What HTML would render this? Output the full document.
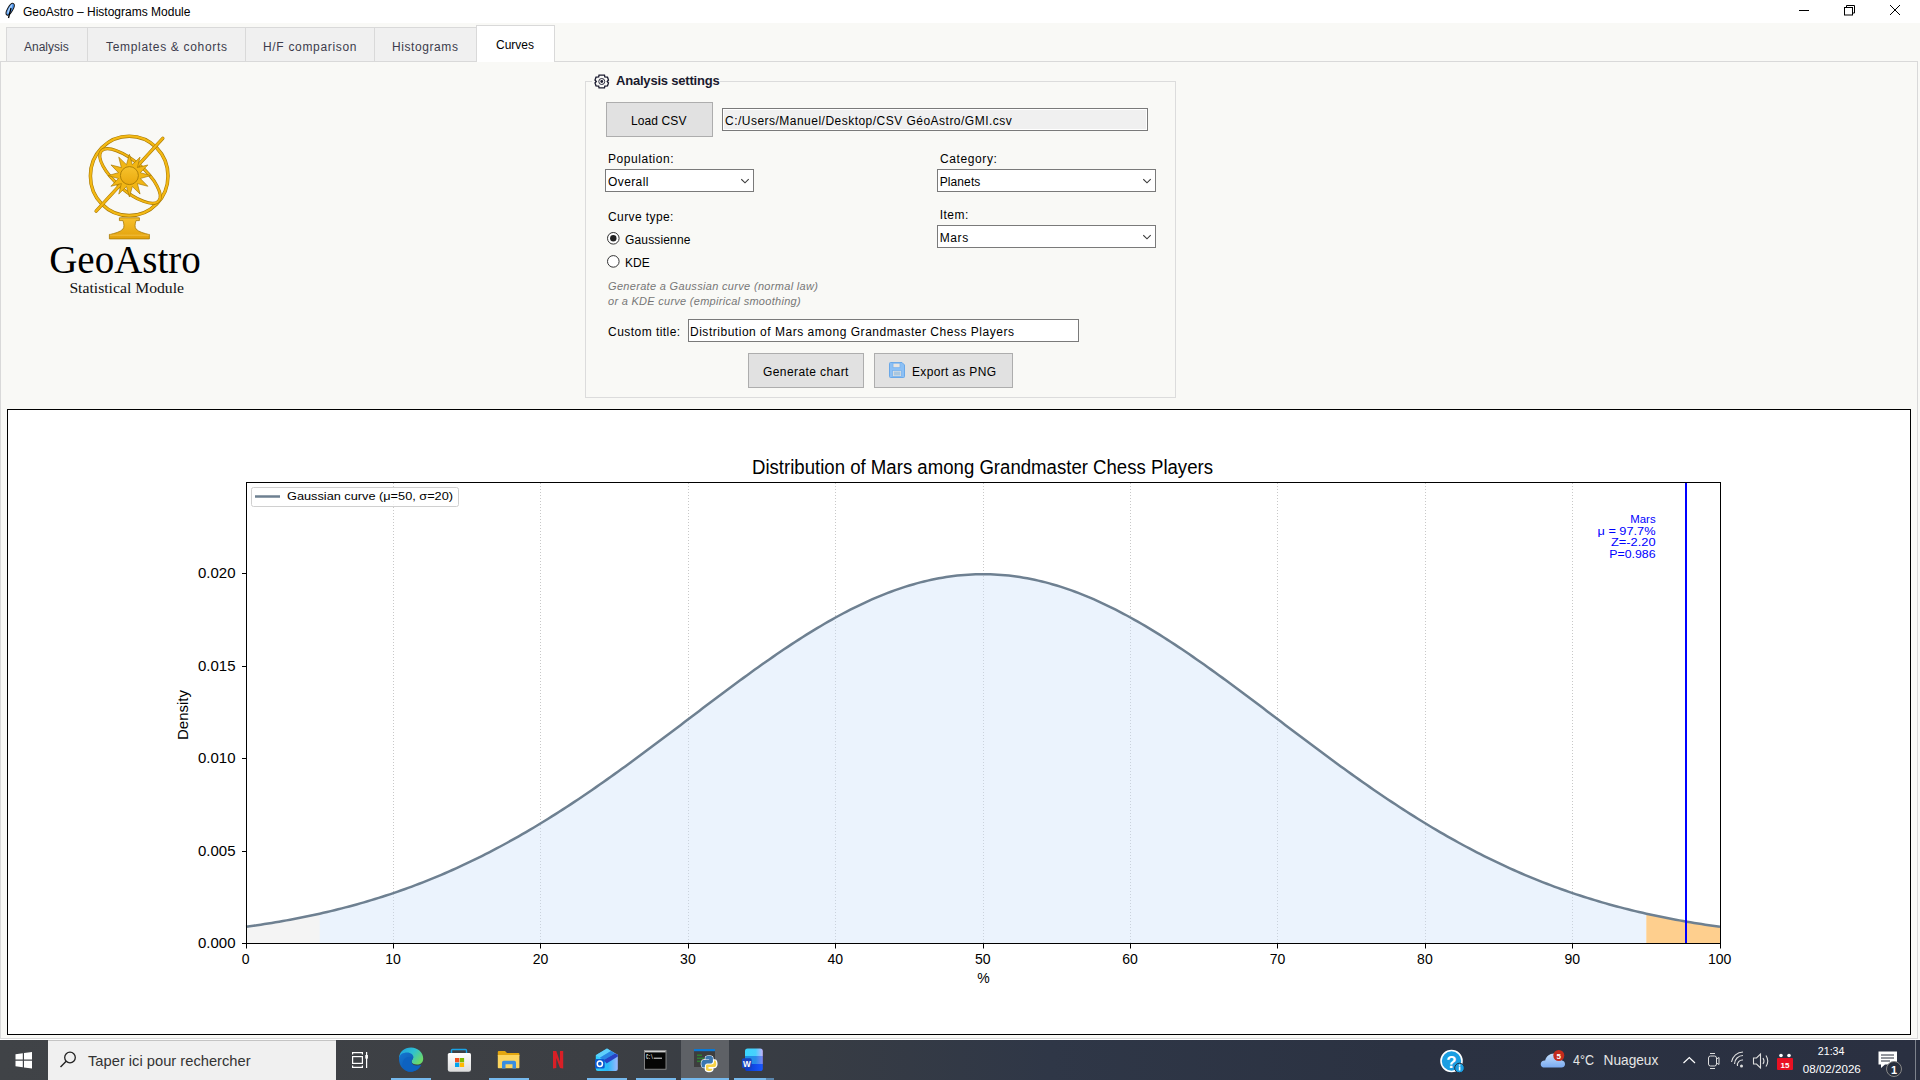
<!DOCTYPE html>
<html><head><meta charset="utf-8">
<style>
*{box-sizing:border-box;margin:0;padding:0}
html,body{width:1920px;height:1080px;overflow:hidden;background:#f9f9f6;font-family:"Liberation Sans",sans-serif;color:#000}
.a{position:absolute}
.t{position:absolute;white-space:nowrap;line-height:1}
#titlebar{left:0;top:0;width:1920px;height:23px;background:#fff}
.tab{position:absolute;top:27px;height:34px;background:#f0f0f0;border:1px solid #d9d9d9;border-bottom:none}
.tabtxt{position:absolute;font-size:12px;color:#3c3c4c;white-space:nowrap;line-height:1}
.btn{position:absolute;background:#e1e1e1;border:1px solid #adadad}
.entry{position:absolute;border:1px solid #7a7a7a;background:#fff}
.lbl{position:absolute;font-size:12px;white-space:nowrap;line-height:1}
.cb{position:absolute;border:1px solid #7a7a7a;background:#fff}
</style></head><body>
<!-- title bar -->
<div id="titlebar" class="a"></div>
<svg class="a" style="left:0;top:0" width="20" height="22" viewBox="0 0 20 22">
<ellipse cx="10.2" cy="9.3" rx="6.6" ry="2.6" transform="rotate(-60 10.2 9.3)" fill="#4d94ec" stroke="#151515" stroke-width="1"/>
<path d="M7.2 13.8 C7.5 10 9.5 6 12.6 3.8 L10.3 11.5Z" fill="#a9d2ff"/>
<path d="M8.5 18 L11 8" stroke="#000" stroke-width="1.3"/>
</svg>
<div class="t" style="left:23px;top:6px;font-size:12px">GeoAstro – Histograms Module</div>
<svg class="a" style="left:1790px;top:0" width="130" height="22">
<line x1="9" y1="10.5" x2="19" y2="10.5" stroke="#000" stroke-width="1"/>
<rect x="54.5" y="7.5" width="8" height="7.5" fill="none" stroke="#000" stroke-width="1"/>
<path d="M56.5 7.5 V5.5 H64.5 V13 H62.5" fill="none" stroke="#000" stroke-width="1"/>
<path d="M100 5 L110 15 M110 5 L100 15" stroke="#000" stroke-width="1"/>
</svg>
<!-- notebook pane border -->
<div class="a" style="left:0;top:61px;width:1918px;height:978px;border:1px solid #d9d9d9;border-bottom:1px solid #d9d9d9"></div>
<!-- tabs -->
<div class="tab" style="left:6px;width:82px"></div>
<div class="tab" style="left:87px;width:159px"></div>
<div class="tab" style="left:245px;width:130px"></div>
<div class="tab" style="left:374px;width:103px"></div>
<div class="tab" style="left:476px;top:25px;height:37px;width:79px;background:#fff"></div>
<div class="tabtxt" style="left:24px;top:41px">Analysis</div>
<div class="tabtxt" style="left:106px;top:41px;letter-spacing:0.68px">Templates &amp; cohorts</div>
<div class="tabtxt" style="left:263px;top:41px;letter-spacing:0.68px">H/F comparison</div>
<div class="tabtxt" style="left:392px;top:41px;letter-spacing:0.58px">Histograms</div>
<div class="tabtxt" style="left:496px;top:39px;color:#000">Curves</div>
<!-- logo -->
<svg class="a" style="left:0;top:100px" width="260" height="220" viewBox="0 100 260 220">
<defs>
<linearGradient id="gold" x1="0" y1="0" x2="0" y2="1"><stop offset="0" stop-color="#f7c02a"/><stop offset="1" stop-color="#e2a10c"/></linearGradient>
<linearGradient id="gold2" x1="0" y1="0" x2="0" y2="1"><stop offset="0" stop-color="#f6c22c"/><stop offset="1" stop-color="#eaa90e"/></linearGradient>
</defs>
<ellipse cx="129.2" cy="175.9" rx="38.8" ry="39.7" fill="none" stroke="#a87a05" stroke-width="3.5"/>
<ellipse cx="129.2" cy="175.9" rx="38.8" ry="39.7" fill="none" stroke="#f4b914" stroke-width="2.3"/>
<ellipse cx="130" cy="176" rx="38" ry="14.5" transform="rotate(41 130 176)" fill="none" stroke="#a87a05" stroke-width="3.2"/>
<ellipse cx="130" cy="176" rx="38" ry="14.5" transform="rotate(41 130 176)" fill="none" stroke="#f2b512" stroke-width="2.1"/>
<line x1="96.1" y1="211.1" x2="162.8" y2="138.3" stroke="#a87a05" stroke-width="3.4" stroke-linecap="round"/>
<line x1="96.1" y1="211.1" x2="162.8" y2="138.3" stroke="#f2b512" stroke-width="2.3" stroke-linecap="round"/>
<path d="M129.40 154.30 L132.32 164.69 L140.05 157.15 L137.39 167.61 L147.85 164.95 L140.31 172.68 L150.70 175.60 L140.31 178.52 L147.85 186.25 L137.39 183.59 L140.05 194.05 L132.32 186.51 L129.40 196.90 L126.48 186.51 L118.75 194.05 L121.41 183.59 L110.95 186.25 L118.49 178.52 L108.10 175.60 L118.49 172.68 L110.95 164.95 L121.41 167.61 L118.75 157.15 L126.48 164.69Z" fill="#f2b614" stroke="#a87a05" stroke-width="0.7" stroke-linejoin="miter"/><circle cx="129.4" cy="175.6" r="9" fill="url(#gold2)" stroke="#a87a05" stroke-width="0.9"/>
<path d="M119.4 217.8 H139.4 V220.6 H136 C135 224 134.5 227 136 229 C138.5 232 145 233.5 148.5 234.4 H149.4 V238.9 H109.4 V234.4 H110.3 C114 233.5 120.5 232 123 229 C124.5 227 124 224 123 220.6 H119.4Z" fill="url(#gold)" stroke="#a87a05" stroke-width="0.8"/>
<line x1="110" y1="235.2" x2="148.8" y2="235.2" stroke="#f9d060" stroke-width="0.6"/>
<text x="125" y="273" font-family="Liberation Serif" font-size="39" text-anchor="middle" fill="#000">GeoAstro</text>
<text x="69.4" y="293.3" font-family="Liberation Serif" font-size="15.6" fill="#111" textLength="114.6" lengthAdjust="spacingAndGlyphs">Statistical Module</text>
</svg>
<!-- analysis settings labelframe -->
<div class="a" style="left:585px;top:81px;width:591px;height:317px;border:1px solid #dcdcdc"></div>
<div class="a" style="left:592px;top:72px;width:128px;height:18px;background:#f9f9f6"></div>
<svg class="a" style="left:594px;top:74px" width="16" height="15" viewBox="0 0 16 15">
<path d="M5 1.2 H10.5 L10.8 2.8 L13.5 3.2 L14.5 6 L13.2 7.5 L14.5 9 L13.5 11.8 L10.8 12.2 L10.5 13.8 H5 L4.7 12.2 L2 11.8 L1 9 L2.3 7.5 L1 6 L2 3.2 L4.7 2.8Z" fill="none" stroke="#1a1a2e" stroke-width="1.3"/>
<circle cx="7.75" cy="7.5" r="3" fill="none" stroke="#2a2a3e" stroke-width="1"/>
<circle cx="7.75" cy="7.5" r="1.4" fill="#1a1a2e"/>
</svg>
<div class="t" style="left:616px;top:74px;font-size:13px;font-weight:bold;color:#1a1a2e;letter-spacing:-0.2px">Analysis settings</div>

<div class="btn" style="left:606px;top:102px;width:107px;height:35px"></div>
<div class="lbl" style="left:631px;top:115px;letter-spacing:0.1px">Load CSV</div>
<div class="entry" style="left:722px;top:108px;width:426px;height:23px;background:#f0f0f0;box-shadow:inset 0 0 0 1px #fff"></div>
<div class="lbl" style="left:725px;top:115px;letter-spacing:0.48px">C:/Users/Manuel/Desktop/CSV GéoAstro/GMI.csv</div>

<div class="lbl" style="left:608px;top:153px;letter-spacing:0.55px">Population:</div>
<div class="cb" style="left:605px;top:169px;width:149px;height:23px"></div>
<div class="lbl" style="left:608px;top:176px;letter-spacing:0.4px">Overall</div>
<svg class="a" style="left:741px;top:177px" width="10" height="8"><path d="M0.3 2.2 L4 5.8 L7.7 2.2" fill="none" stroke="#3a3a3a" stroke-width="1.1"/></svg>

<div class="lbl" style="left:940px;top:153px;letter-spacing:0.6px">Category:</div>
<div class="cb" style="left:937px;top:169px;width:219px;height:23px"></div>
<div class="lbl" style="left:939.7px;top:176px;letter-spacing:0.1px">Planets</div>
<svg class="a" style="left:1143px;top:177px" width="10" height="8"><path d="M0.3 2.2 L4 5.8 L7.7 2.2" fill="none" stroke="#3a3a3a" stroke-width="1.1"/></svg>

<div class="lbl" style="left:608px;top:211px;letter-spacing:0.4px">Curve type:</div>
<div class="lbl" style="left:939.7px;top:209px;letter-spacing:0.5px">Item:</div>
<div class="cb" style="left:937px;top:225px;width:219px;height:23px"></div>
<div class="lbl" style="left:939.7px;top:232px;letter-spacing:0.6px">Mars</div>
<svg class="a" style="left:1143px;top:233px" width="10" height="8"><path d="M0.3 2.2 L4 5.8 L7.7 2.2" fill="none" stroke="#3a3a3a" stroke-width="1.1"/></svg>

<svg class="a" style="left:605px;top:230px" width="18" height="40">
<circle cx="8.3" cy="8.3" r="5.8" fill="#fff" stroke="#333" stroke-width="1"/>
<circle cx="8.3" cy="8.3" r="3.2" fill="#222"/>
<circle cx="8.3" cy="31.4" r="5.8" fill="#fff" stroke="#333" stroke-width="1"/>
</svg>
<div class="lbl" style="left:625px;top:234px;letter-spacing:0.15px">Gaussienne</div>
<div class="lbl" style="left:625px;top:257px">KDE</div>
<div class="lbl" style="left:608px;top:281px;font-size:11px;font-style:italic;color:#777;letter-spacing:0.32px">Generate a Gaussian curve (normal law)</div>
<div class="lbl" style="left:608px;top:296px;font-size:11px;font-style:italic;color:#777;letter-spacing:0.28px">or a KDE curve (empirical smoothing)</div>

<div class="lbl" style="left:608px;top:326px;letter-spacing:0.46px">Custom title:</div>
<div class="entry" style="left:688px;top:319px;width:391px;height:23px"></div>
<div class="lbl" style="left:690px;top:326px;letter-spacing:0.52px">Distribution of Mars among Grandmaster Chess Players</div>

<div class="btn" style="left:748px;top:353px;width:116px;height:35px"></div>
<div class="lbl" style="left:763px;top:366px;letter-spacing:0.41px">Generate chart</div>
<div class="btn" style="left:874px;top:353px;width:139px;height:35px"></div>
<svg class="a" style="left:888px;top:361px" width="18" height="18" viewBox="0 0 18 18">
<path d="M1.5 2.5 Q1.5 1.5 2.5 1.5 H14 L16.5 4 V15.5 Q16.5 16.5 15.5 16.5 H2.5 Q1.5 16.5 1.5 15.5Z" fill="#8cc0f5" stroke="#6aa8e8" stroke-width="1"/>
<rect x="5" y="2.2" width="7" height="4.5" fill="#e8e4e0" stroke="#7ab3ee" stroke-width="0.8"/>
<rect x="4.5" y="9.5" width="9" height="6" fill="#e2e2e2" stroke="#7ab3ee" stroke-width="0.8"/>
<rect x="5.8" y="10.5" width="6.6" height="4" fill="#a9c7e0"/>
</svg>
<div class="lbl" style="left:912px;top:366px;letter-spacing:0.33px">Export as PNG</div>
<!-- chart -->
<div class="a" style="left:7px;top:409px;width:1904px;height:626px;background:#fff;border:1px solid #000"></div>
<svg class="a" style="left:0;top:0" width="1920" height="1080" font-family="Liberation Sans" font-size="13">
<line x1="393.5" y1="483" x2="393.5" y2="943" stroke="#c8c8c8" stroke-width="1" stroke-dasharray="1 2"/><line x1="540.5" y1="483" x2="540.5" y2="943" stroke="#c8c8c8" stroke-width="1" stroke-dasharray="1 2"/><line x1="688.5" y1="483" x2="688.5" y2="943" stroke="#c8c8c8" stroke-width="1" stroke-dasharray="1 2"/><line x1="835.5" y1="483" x2="835.5" y2="943" stroke="#c8c8c8" stroke-width="1" stroke-dasharray="1 2"/><line x1="983.5" y1="483" x2="983.5" y2="943" stroke="#c8c8c8" stroke-width="1" stroke-dasharray="1 2"/><line x1="1130.5" y1="483" x2="1130.5" y2="943" stroke="#c8c8c8" stroke-width="1" stroke-dasharray="1 2"/><line x1="1277.5" y1="483" x2="1277.5" y2="943" stroke="#c8c8c8" stroke-width="1" stroke-dasharray="1 2"/><line x1="1425.5" y1="483" x2="1425.5" y2="943" stroke="#c8c8c8" stroke-width="1" stroke-dasharray="1 2"/><line x1="1572.5" y1="483" x2="1572.5" y2="943" stroke="#c8c8c8" stroke-width="1" stroke-dasharray="1 2"/>
<path d="M246.00 943.50 L246.00 926.80 L249.69 926.28 L253.37 925.76 L257.06 925.21 L260.74 924.66 L264.43 924.09 L268.11 923.51 L271.80 922.91 L275.48 922.30 L279.17 921.67 L282.85 921.02 L286.54 920.36 L290.22 919.69 L293.90 918.99 L297.59 918.28 L301.27 917.56 L304.96 916.81 L308.64 916.05 L312.33 915.27 L316.01 914.47 L319.70 913.66 L319.70 943.50 Z" fill="#d3d3d3" fill-opacity="0.25"/>
<path d="M319.70 943.50 L319.70 913.66 L323.38 912.82 L327.07 911.97 L330.75 911.10 L334.44 910.20 L338.12 909.29 L341.81 908.36 L345.50 907.41 L349.18 906.44 L352.87 905.44 L356.55 904.43 L360.24 903.39 L363.92 902.34 L367.61 901.26 L371.29 900.16 L374.98 899.04 L378.66 897.89 L382.35 896.72 L386.03 895.53 L389.72 894.32 L393.40 893.09 L397.09 891.83 L400.77 890.54 L404.46 889.24 L408.14 887.90 L411.82 886.55 L415.51 885.17 L419.19 883.77 L422.88 882.34 L426.56 880.89 L430.25 879.41 L433.94 877.90 L437.62 876.38 L441.31 874.82 L444.99 873.24 L448.68 871.64 L452.36 870.01 L456.05 868.36 L459.73 866.67 L463.41 864.97 L467.10 863.24 L470.78 861.48 L474.47 859.70 L478.15 857.89 L481.84 856.05 L485.52 854.19 L489.21 852.31 L492.89 850.39 L496.58 848.46 L500.26 846.49 L503.95 844.51 L507.63 842.49 L511.32 840.45 L515.00 838.39 L518.69 836.30 L522.38 834.19 L526.06 832.05 L529.75 829.89 L533.43 827.70 L537.12 825.49 L540.80 823.26 L544.49 821.00 L548.17 818.72 L551.86 816.42 L555.54 814.10 L559.23 811.75 L562.91 809.38 L566.60 806.99 L570.28 804.58 L573.97 802.14 L577.65 799.69 L581.34 797.22 L585.02 794.73 L588.70 792.21 L592.39 789.68 L596.08 787.14 L599.76 784.57 L603.44 781.99 L607.13 779.39 L610.82 776.77 L614.50 774.14 L618.18 771.50 L621.87 768.84 L625.56 766.16 L629.24 763.47 L632.92 760.78 L636.61 758.07 L640.30 755.34 L643.98 752.61 L647.66 749.87 L651.35 747.12 L655.04 744.36 L658.72 741.60 L662.40 738.82 L666.09 736.04 L669.78 733.26 L673.46 730.47 L677.14 727.68 L680.83 724.89 L684.51 722.09 L688.20 719.30 L691.88 716.50 L695.57 713.71 L699.25 710.91 L702.94 708.12 L706.62 705.34 L710.31 702.55 L714.00 699.78 L717.68 697.00 L721.37 694.24 L725.05 691.49 L728.74 688.74 L732.42 686.00 L736.11 683.28 L739.79 680.57 L743.48 677.87 L747.16 675.18 L750.85 672.51 L754.53 669.86 L758.22 667.22 L761.90 664.60 L765.59 662.00 L769.27 659.42 L772.96 656.86 L776.64 654.32 L780.33 651.81 L784.01 649.32 L787.70 646.85 L791.38 644.41 L795.07 642.00 L798.75 639.62 L802.44 637.26 L806.12 634.93 L809.81 632.64 L813.49 630.38 L817.17 628.15 L820.86 625.95 L824.54 623.79 L828.23 621.66 L831.91 619.57 L835.60 617.52 L839.28 615.50 L842.97 613.52 L846.65 611.59 L850.34 609.69 L854.02 607.84 L857.71 606.03 L861.39 604.26 L865.08 602.53 L868.76 600.85 L872.45 599.22 L876.13 597.63 L879.82 596.09 L883.50 594.60 L887.19 593.15 L890.88 591.75 L894.56 590.41 L898.25 589.11 L901.93 587.86 L905.62 586.67 L909.30 585.53 L912.99 584.43 L916.67 583.40 L920.36 582.41 L924.04 581.48 L927.73 580.60 L931.41 579.78 L935.10 579.02 L938.78 578.30 L942.47 577.65 L946.15 577.05 L949.84 576.50 L953.52 576.02 L957.21 575.59 L960.89 575.21 L964.58 574.90 L968.26 574.64 L971.95 574.44 L975.63 574.29 L979.32 574.21 L983.00 574.18 L986.69 574.21 L990.37 574.29 L994.06 574.44 L997.74 574.64 L1001.42 574.90 L1005.11 575.21 L1008.79 575.59 L1012.48 576.02 L1016.16 576.50 L1019.85 577.05 L1023.53 577.65 L1027.22 578.30 L1030.90 579.02 L1034.59 579.78 L1038.28 580.60 L1041.96 581.48 L1045.64 582.41 L1049.33 583.40 L1053.01 584.43 L1056.70 585.53 L1060.38 586.67 L1064.07 587.86 L1067.76 589.11 L1071.44 590.41 L1075.12 591.75 L1078.81 593.15 L1082.49 594.60 L1086.18 596.09 L1089.87 597.63 L1093.55 599.22 L1097.24 600.85 L1100.92 602.53 L1104.61 604.26 L1108.29 606.03 L1111.97 607.84 L1115.66 609.69 L1119.35 611.59 L1123.03 613.52 L1126.72 615.50 L1130.40 617.52 L1134.09 619.57 L1137.77 621.66 L1141.45 623.79 L1145.14 625.95 L1148.83 628.15 L1152.51 630.38 L1156.20 632.64 L1159.88 634.93 L1163.57 637.26 L1167.25 639.62 L1170.93 642.00 L1174.62 644.41 L1178.31 646.85 L1181.99 649.32 L1185.68 651.81 L1189.36 654.32 L1193.05 656.86 L1196.73 659.42 L1200.41 662.00 L1204.10 664.60 L1207.78 667.22 L1211.47 669.86 L1215.15 672.51 L1218.84 675.18 L1222.53 677.87 L1226.21 680.57 L1229.89 683.28 L1233.58 686.00 L1237.26 688.74 L1240.95 691.49 L1244.63 694.24 L1248.32 697.00 L1252.01 699.78 L1255.69 702.55 L1259.38 705.34 L1263.06 708.12 L1266.74 710.91 L1270.43 713.71 L1274.12 716.50 L1277.80 719.30 L1281.49 722.09 L1285.17 724.89 L1288.86 727.68 L1292.54 730.47 L1296.22 733.26 L1299.91 736.04 L1303.60 738.82 L1307.28 741.60 L1310.96 744.36 L1314.65 747.12 L1318.34 749.87 L1322.02 752.61 L1325.70 755.34 L1329.39 758.07 L1333.08 760.78 L1336.76 763.47 L1340.44 766.16 L1344.13 768.84 L1347.82 771.50 L1351.50 774.14 L1355.18 776.77 L1358.87 779.39 L1362.56 781.99 L1366.24 784.57 L1369.92 787.14 L1373.61 789.68 L1377.30 792.21 L1380.98 794.73 L1384.66 797.22 L1388.35 799.69 L1392.04 802.14 L1395.72 804.58 L1399.40 806.99 L1403.09 809.38 L1406.78 811.75 L1410.46 814.10 L1414.14 816.42 L1417.83 818.72 L1421.52 821.00 L1425.20 823.26 L1428.88 825.49 L1432.57 827.70 L1436.26 829.89 L1439.94 832.05 L1443.62 834.19 L1447.31 836.30 L1451.00 838.39 L1454.68 840.45 L1458.37 842.49 L1462.05 844.51 L1465.74 846.49 L1469.42 848.46 L1473.11 850.39 L1476.79 852.31 L1480.47 854.19 L1484.16 856.05 L1487.85 857.89 L1491.53 859.70 L1495.21 861.48 L1498.90 863.24 L1502.59 864.97 L1506.27 866.67 L1509.95 868.36 L1513.64 870.01 L1517.33 871.64 L1521.01 873.24 L1524.69 874.82 L1528.38 876.38 L1532.07 877.90 L1535.75 879.41 L1539.43 880.89 L1543.12 882.34 L1546.81 883.77 L1550.49 885.17 L1554.17 886.55 L1557.86 887.90 L1561.55 889.24 L1565.23 890.54 L1568.91 891.83 L1572.60 893.09 L1576.29 894.32 L1579.97 895.53 L1583.65 896.72 L1587.34 897.89 L1591.03 899.04 L1594.71 900.16 L1598.39 901.26 L1602.08 902.34 L1605.77 903.39 L1609.45 904.43 L1613.13 905.44 L1616.82 906.44 L1620.51 907.41 L1624.19 908.36 L1627.88 909.29 L1631.56 910.20 L1635.25 911.10 L1638.93 911.97 L1642.62 912.82 L1646.30 913.66 L1646.30 943.50 Z" fill="#cce0fa" fill-opacity="0.4"/>
<path d="M1646.30 943.50 L1646.30 913.66 L1649.99 914.47 L1653.67 915.27 L1657.36 916.05 L1661.04 916.81 L1664.72 917.56 L1668.41 918.28 L1672.10 918.99 L1675.78 919.69 L1679.46 920.36 L1683.15 921.02 L1686.84 921.67 L1690.52 922.30 L1694.20 922.91 L1697.89 923.51 L1701.58 924.09 L1705.26 924.66 L1708.94 925.21 L1712.63 925.76 L1716.32 926.28 L1720.00 926.80 L1720.00 943.50 Z" fill="#fecf8e"/>
<path d="M246.00 926.80 L249.69 926.28 L253.37 925.76 L257.06 925.21 L260.74 924.66 L264.43 924.09 L268.11 923.51 L271.80 922.91 L275.48 922.30 L279.17 921.67 L282.85 921.02 L286.54 920.36 L290.22 919.69 L293.90 918.99 L297.59 918.28 L301.27 917.56 L304.96 916.81 L308.64 916.05 L312.33 915.27 L316.01 914.47 L319.70 913.66 L323.38 912.82 L327.07 911.97 L330.75 911.10 L334.44 910.20 L338.12 909.29 L341.81 908.36 L345.50 907.41 L349.18 906.44 L352.87 905.44 L356.55 904.43 L360.24 903.39 L363.92 902.34 L367.61 901.26 L371.29 900.16 L374.98 899.04 L378.66 897.89 L382.35 896.72 L386.03 895.53 L389.72 894.32 L393.40 893.09 L397.09 891.83 L400.77 890.54 L404.46 889.24 L408.14 887.90 L411.82 886.55 L415.51 885.17 L419.19 883.77 L422.88 882.34 L426.56 880.89 L430.25 879.41 L433.94 877.90 L437.62 876.38 L441.31 874.82 L444.99 873.24 L448.68 871.64 L452.36 870.01 L456.05 868.36 L459.73 866.67 L463.41 864.97 L467.10 863.24 L470.78 861.48 L474.47 859.70 L478.15 857.89 L481.84 856.05 L485.52 854.19 L489.21 852.31 L492.89 850.39 L496.58 848.46 L500.26 846.49 L503.95 844.51 L507.63 842.49 L511.32 840.45 L515.00 838.39 L518.69 836.30 L522.38 834.19 L526.06 832.05 L529.75 829.89 L533.43 827.70 L537.12 825.49 L540.80 823.26 L544.49 821.00 L548.17 818.72 L551.86 816.42 L555.54 814.10 L559.23 811.75 L562.91 809.38 L566.60 806.99 L570.28 804.58 L573.97 802.14 L577.65 799.69 L581.34 797.22 L585.02 794.73 L588.70 792.21 L592.39 789.68 L596.08 787.14 L599.76 784.57 L603.44 781.99 L607.13 779.39 L610.82 776.77 L614.50 774.14 L618.18 771.50 L621.87 768.84 L625.56 766.16 L629.24 763.47 L632.92 760.78 L636.61 758.07 L640.30 755.34 L643.98 752.61 L647.66 749.87 L651.35 747.12 L655.04 744.36 L658.72 741.60 L662.40 738.82 L666.09 736.04 L669.78 733.26 L673.46 730.47 L677.14 727.68 L680.83 724.89 L684.51 722.09 L688.20 719.30 L691.88 716.50 L695.57 713.71 L699.25 710.91 L702.94 708.12 L706.62 705.34 L710.31 702.55 L714.00 699.78 L717.68 697.00 L721.37 694.24 L725.05 691.49 L728.74 688.74 L732.42 686.00 L736.11 683.28 L739.79 680.57 L743.48 677.87 L747.16 675.18 L750.85 672.51 L754.53 669.86 L758.22 667.22 L761.90 664.60 L765.59 662.00 L769.27 659.42 L772.96 656.86 L776.64 654.32 L780.33 651.81 L784.01 649.32 L787.70 646.85 L791.38 644.41 L795.07 642.00 L798.75 639.62 L802.44 637.26 L806.12 634.93 L809.81 632.64 L813.49 630.38 L817.17 628.15 L820.86 625.95 L824.54 623.79 L828.23 621.66 L831.91 619.57 L835.60 617.52 L839.28 615.50 L842.97 613.52 L846.65 611.59 L850.34 609.69 L854.02 607.84 L857.71 606.03 L861.39 604.26 L865.08 602.53 L868.76 600.85 L872.45 599.22 L876.13 597.63 L879.82 596.09 L883.50 594.60 L887.19 593.15 L890.88 591.75 L894.56 590.41 L898.25 589.11 L901.93 587.86 L905.62 586.67 L909.30 585.53 L912.99 584.43 L916.67 583.40 L920.36 582.41 L924.04 581.48 L927.73 580.60 L931.41 579.78 L935.10 579.02 L938.78 578.30 L942.47 577.65 L946.15 577.05 L949.84 576.50 L953.52 576.02 L957.21 575.59 L960.89 575.21 L964.58 574.90 L968.26 574.64 L971.95 574.44 L975.63 574.29 L979.32 574.21 L983.00 574.18 L986.69 574.21 L990.37 574.29 L994.06 574.44 L997.74 574.64 L1001.42 574.90 L1005.11 575.21 L1008.79 575.59 L1012.48 576.02 L1016.16 576.50 L1019.85 577.05 L1023.53 577.65 L1027.22 578.30 L1030.90 579.02 L1034.59 579.78 L1038.28 580.60 L1041.96 581.48 L1045.64 582.41 L1049.33 583.40 L1053.01 584.43 L1056.70 585.53 L1060.38 586.67 L1064.07 587.86 L1067.76 589.11 L1071.44 590.41 L1075.12 591.75 L1078.81 593.15 L1082.49 594.60 L1086.18 596.09 L1089.87 597.63 L1093.55 599.22 L1097.24 600.85 L1100.92 602.53 L1104.61 604.26 L1108.29 606.03 L1111.97 607.84 L1115.66 609.69 L1119.35 611.59 L1123.03 613.52 L1126.72 615.50 L1130.40 617.52 L1134.09 619.57 L1137.77 621.66 L1141.45 623.79 L1145.14 625.95 L1148.83 628.15 L1152.51 630.38 L1156.20 632.64 L1159.88 634.93 L1163.57 637.26 L1167.25 639.62 L1170.93 642.00 L1174.62 644.41 L1178.31 646.85 L1181.99 649.32 L1185.68 651.81 L1189.36 654.32 L1193.05 656.86 L1196.73 659.42 L1200.41 662.00 L1204.10 664.60 L1207.78 667.22 L1211.47 669.86 L1215.15 672.51 L1218.84 675.18 L1222.53 677.87 L1226.21 680.57 L1229.89 683.28 L1233.58 686.00 L1237.26 688.74 L1240.95 691.49 L1244.63 694.24 L1248.32 697.00 L1252.01 699.78 L1255.69 702.55 L1259.38 705.34 L1263.06 708.12 L1266.74 710.91 L1270.43 713.71 L1274.12 716.50 L1277.80 719.30 L1281.49 722.09 L1285.17 724.89 L1288.86 727.68 L1292.54 730.47 L1296.22 733.26 L1299.91 736.04 L1303.60 738.82 L1307.28 741.60 L1310.96 744.36 L1314.65 747.12 L1318.34 749.87 L1322.02 752.61 L1325.70 755.34 L1329.39 758.07 L1333.08 760.78 L1336.76 763.47 L1340.44 766.16 L1344.13 768.84 L1347.82 771.50 L1351.50 774.14 L1355.18 776.77 L1358.87 779.39 L1362.56 781.99 L1366.24 784.57 L1369.92 787.14 L1373.61 789.68 L1377.30 792.21 L1380.98 794.73 L1384.66 797.22 L1388.35 799.69 L1392.04 802.14 L1395.72 804.58 L1399.40 806.99 L1403.09 809.38 L1406.78 811.75 L1410.46 814.10 L1414.14 816.42 L1417.83 818.72 L1421.52 821.00 L1425.20 823.26 L1428.88 825.49 L1432.57 827.70 L1436.26 829.89 L1439.94 832.05 L1443.62 834.19 L1447.31 836.30 L1451.00 838.39 L1454.68 840.45 L1458.37 842.49 L1462.05 844.51 L1465.74 846.49 L1469.42 848.46 L1473.11 850.39 L1476.79 852.31 L1480.47 854.19 L1484.16 856.05 L1487.85 857.89 L1491.53 859.70 L1495.21 861.48 L1498.90 863.24 L1502.59 864.97 L1506.27 866.67 L1509.95 868.36 L1513.64 870.01 L1517.33 871.64 L1521.01 873.24 L1524.69 874.82 L1528.38 876.38 L1532.07 877.90 L1535.75 879.41 L1539.43 880.89 L1543.12 882.34 L1546.81 883.77 L1550.49 885.17 L1554.17 886.55 L1557.86 887.90 L1561.55 889.24 L1565.23 890.54 L1568.91 891.83 L1572.60 893.09 L1576.29 894.32 L1579.97 895.53 L1583.65 896.72 L1587.34 897.89 L1591.03 899.04 L1594.71 900.16 L1598.39 901.26 L1602.08 902.34 L1605.77 903.39 L1609.45 904.43 L1613.13 905.44 L1616.82 906.44 L1620.51 907.41 L1624.19 908.36 L1627.88 909.29 L1631.56 910.20 L1635.25 911.10 L1638.93 911.97 L1642.62 912.82 L1646.30 913.66 L1649.99 914.47 L1653.67 915.27 L1657.36 916.05 L1661.04 916.81 L1664.72 917.56 L1668.41 918.28 L1672.10 918.99 L1675.78 919.69 L1679.46 920.36 L1683.15 921.02 L1686.84 921.67 L1690.52 922.30 L1694.20 922.91 L1697.89 923.51 L1701.58 924.09 L1705.26 924.66 L1708.94 925.21 L1712.63 925.76 L1716.32 926.28 L1720.00 926.80" fill="none" stroke="#6e8091" stroke-width="2.5"/>
<line x1="1686" y1="483" x2="1686" y2="943" stroke="#0000ff" stroke-width="2"/>
<rect x="246.5" y="482.5" width="1474" height="461" fill="none" stroke="#000" stroke-width="1"/>
<line x1="246.5" y1="943.5" x2="246.5" y2="948.5" stroke="#000" stroke-width="1"/><line x1="393.5" y1="943.5" x2="393.5" y2="948.5" stroke="#000" stroke-width="1"/><line x1="540.5" y1="943.5" x2="540.5" y2="948.5" stroke="#000" stroke-width="1"/><line x1="688.5" y1="943.5" x2="688.5" y2="948.5" stroke="#000" stroke-width="1"/><line x1="835.5" y1="943.5" x2="835.5" y2="948.5" stroke="#000" stroke-width="1"/><line x1="983.5" y1="943.5" x2="983.5" y2="948.5" stroke="#000" stroke-width="1"/><line x1="1130.5" y1="943.5" x2="1130.5" y2="948.5" stroke="#000" stroke-width="1"/><line x1="1277.5" y1="943.5" x2="1277.5" y2="948.5" stroke="#000" stroke-width="1"/><line x1="1425.5" y1="943.5" x2="1425.5" y2="948.5" stroke="#000" stroke-width="1"/><line x1="1572.5" y1="943.5" x2="1572.5" y2="948.5" stroke="#000" stroke-width="1"/><line x1="1720.5" y1="943.5" x2="1720.5" y2="948.5" stroke="#000" stroke-width="1"/><text x="245.7" y="964" font-size="14.2" text-anchor="middle" textLength="7.8" lengthAdjust="spacingAndGlyphs">0</text><text x="393.1" y="964" font-size="14.2" text-anchor="middle" textLength="15.6" lengthAdjust="spacingAndGlyphs">10</text><text x="540.5" y="964" font-size="14.2" text-anchor="middle" textLength="15.6" lengthAdjust="spacingAndGlyphs">20</text><text x="687.9" y="964" font-size="14.2" text-anchor="middle" textLength="15.6" lengthAdjust="spacingAndGlyphs">30</text><text x="835.3" y="964" font-size="14.2" text-anchor="middle" textLength="15.6" lengthAdjust="spacingAndGlyphs">40</text><text x="982.7" y="964" font-size="14.2" text-anchor="middle" textLength="15.6" lengthAdjust="spacingAndGlyphs">50</text><text x="1130.1" y="964" font-size="14.2" text-anchor="middle" textLength="15.6" lengthAdjust="spacingAndGlyphs">60</text><text x="1277.5" y="964" font-size="14.2" text-anchor="middle" textLength="15.6" lengthAdjust="spacingAndGlyphs">70</text><text x="1424.9" y="964" font-size="14.2" text-anchor="middle" textLength="15.6" lengthAdjust="spacingAndGlyphs">80</text><text x="1572.3" y="964" font-size="14.2" text-anchor="middle" textLength="15.6" lengthAdjust="spacingAndGlyphs">90</text><text x="1719.7" y="964" font-size="14.2" text-anchor="middle" textLength="23.4" lengthAdjust="spacingAndGlyphs">100</text><line x1="242" y1="943.5" x2="246.5" y2="943.5" stroke="#000" stroke-width="1"/><line x1="242" y1="851.5" x2="246.5" y2="851.5" stroke="#000" stroke-width="1"/><line x1="242" y1="758.5" x2="246.5" y2="758.5" stroke="#000" stroke-width="1"/><line x1="242" y1="666.5" x2="246.5" y2="666.5" stroke="#000" stroke-width="1"/><line x1="242" y1="573.5" x2="246.5" y2="573.5" stroke="#000" stroke-width="1"/><text x="198" y="948.1" font-size="14.2" textLength="37.5" lengthAdjust="spacingAndGlyphs">0.000</text><text x="198" y="856.1" font-size="14.2" textLength="37.5" lengthAdjust="spacingAndGlyphs">0.005</text><text x="198" y="763.1" font-size="14.2" textLength="37.5" lengthAdjust="spacingAndGlyphs">0.010</text><text x="198" y="671.1" font-size="14.2" textLength="37.5" lengthAdjust="spacingAndGlyphs">0.015</text><text x="198" y="578.1" font-size="14.2" textLength="37.5" lengthAdjust="spacingAndGlyphs">0.020</text>
<text x="752" y="474.3" font-size="19.6" textLength="461" lengthAdjust="spacingAndGlyphs">Distribution of Mars among Grandmaster Chess Players</text>
<text x="983.5" y="983" font-size="14" text-anchor="middle">%</text>
<text transform="translate(187.8 740) rotate(-90)" font-size="14.1" textLength="50" lengthAdjust="spacingAndGlyphs">Density</text>
<rect x="251.5" y="487.5" width="207" height="19" rx="2" fill="#fff" fill-opacity="0.8" stroke="#d0d0d0" stroke-width="1"/>
<line x1="255" y1="496.5" x2="280" y2="496.5" stroke="#6e8091" stroke-width="2.5"/>
<text x="287" y="500.3" font-size="11.7" textLength="166" lengthAdjust="spacingAndGlyphs">Gaussian curve (μ=50, σ=20)</text>
<g fill="#0000ff" font-size="11.6">
<text x="1630.3" y="523" textLength="25.3" lengthAdjust="spacingAndGlyphs">Mars</text>
<text x="1597.5" y="534.5" textLength="58" lengthAdjust="spacingAndGlyphs">μ = 97.7%</text>
<text x="1611" y="546" textLength="44.6" lengthAdjust="spacingAndGlyphs">Z=-2.20</text>
<text x="1609.3" y="557.5" textLength="46.3" lengthAdjust="spacingAndGlyphs">P=0.986</text>
</g>
</svg>
<!-- window bottom edge -->
<div class="a" style="left:0;top:1039px;width:1920px;height:1px;background:#fff"></div>
<!-- taskbar -->
<div class="a" style="left:0;top:1040px;width:1920px;height:40px;background:linear-gradient(90deg,#404347 0px,#3c3f44 600px,#373c44 820px,#2f3747 1050px,#2b3242 1400px,#2a3041 1920px)"></div>
<svg class="a" style="left:0;top:1040px" width="1920" height="40" font-family="Liberation Sans">
<!-- windows logo -->
<path d="M15.5 14.2 L22.8 13.2 V19.6 H15.5Z M24 13 L32 11.9 V19.6 H24Z M15.5 20.8 H22.8 V27.3 L15.5 26.3Z M24 20.8 H32 V28.6 L24 27.5Z" fill="#fff"/>
<!-- search box -->
<rect x="48" y="0" width="288" height="40" fill="#f0f0f0"/><rect x="48" y="0" width="288" height="1" fill="#c4c4c4"/>
<circle cx="70" cy="17.5" r="5.3" fill="none" stroke="#222" stroke-width="1.3"/>
<line x1="66.2" y1="21.3" x2="60.5" y2="27" stroke="#222" stroke-width="1.4"/>
<text x="88" y="25.5" font-size="15" fill="#333" textLength="162.6" lengthAdjust="spacingAndGlyphs">Taper ici pour rechercher</text>
<!-- task view -->
<g fill="none" stroke="#fff" stroke-width="1.2">
<rect x="352.6" y="16.6" width="9.8" height="6.8"/>
<path d="M352.6 14.5 V12.6 H362.4 V14.5"/>
<path d="M352.6 25.5 V27.4 H362.4 V25.5"/>
<line x1="366.6" y1="12" x2="366.6" y2="28"/>
</g>
<rect x="365.3" y="15" width="2.6" height="3.6" fill="#fff"/>
<!-- edge -->
<defs>
<linearGradient id="edgeTop" x1="0" y1="0" x2="1" y2="0.6"><stop offset="0" stop-color="#1b9de2"/><stop offset="0.55" stop-color="#2fc1d0"/><stop offset="1" stop-color="#6bd86a"/></linearGradient>
<linearGradient id="edgeWave" x1="0" y1="0" x2="1" y2="1"><stop offset="0" stop-color="#1476d2"/><stop offset="1" stop-color="#0b4ea0"/></linearGradient>
<linearGradient id="storeBag" x1="0" y1="0" x2="0" y2="1"><stop offset="0" stop-color="#ffffff"/><stop offset="1" stop-color="#dcdcdc"/></linearGradient>
</defs>
<path d="M399 19 C399 11.5 404.5 7.5 411 7.5 C418 7.5 423.2 12.5 423.2 18.5 C423.2 22.5 420.5 24.5 417 24.5 C414 24.5 411.5 23.5 411.5 21.5 C411.5 20 413 19.5 413 18 C413 15.5 410.5 14 407.5 14 C402.5 14 399 17 399 19Z" fill="url(#edgeTop)"/>
<path d="M399 19 C399 14.5 403 12.5 407 12.5 C411 12.5 413.5 15 413.5 17.5 C413 19 411.5 20 411.5 21.5 C411.5 24.5 415 26 418 25.5 C419.5 25.5 420.5 25 421.3 24.7 C419 29 415 31.8 410.5 31.8 C404 31.8 399 26 399 19Z" fill="url(#edgeWave)"/>
<path d="M402.5 24 C403 19 406 17 409 17 C410.5 17 411.6 17.5 412.5 18.3 C411.8 19.3 411.3 20.3 411.3 21.5 C411.3 24.6 414.6 26.3 418 25.8 C420 25.5 421 25 421.3 24.7 C419 29 415 31.8 410.5 31.8 C406 31.8 402.5 28.5 402.5 24Z" fill="#0d62c0"/>
<rect x="391" y="38" width="40" height="2" fill="#76b9ed"/>
<!-- store -->
<path d="M451.5 13.5 V10.5 Q451.5 9.5 452.5 9.5 H465.5 Q466.5 9.5 466.5 10.5 V13.5" fill="none" stroke="#1aa3e8" stroke-width="1.4"/>
<path d="M447.8 14.5 Q447.8 13 449.3 13 H469.5 Q471 13 471 14.5 V29.5 Q471 31.8 468.7 31.8 H450.1 Q447.8 31.8 447.8 29.5Z" fill="url(#storeBag)"/>
<rect x="455" y="18" width="4.3" height="4.3" fill="#f25022"/><rect x="459.8" y="18" width="4.3" height="4.3" fill="#7fba00"/>
<rect x="455" y="22.7" width="4.3" height="4.3" fill="#00a4ef"/><rect x="459.8" y="22.7" width="4.3" height="4.3" fill="#ffb900"/>
<!-- folder -->
<path d="M497.8 12 Q497.8 11 498.8 11 H505 L507 13 H518.5 Q519.4 13 519.4 14 V16 H497.8Z" fill="#e3a60f"/>
<path d="M497.8 15 H519.4 V27.5 Q519.4 28.2 518.7 28.2 H498.5 Q497.8 28.2 497.8 27.5Z" fill="#fcd55f"/>
<path d="M502 28.6 V22.5 Q502 20.8 503.7 20.8 H514.3 Q516 20.8 516 22.5 V28.6 H512.5 V24.2 H505.5 V28.6Z" fill="#3a8ee0"/>
<rect x="489" y="38" width="40" height="2" fill="#76b9ed"/>
<!-- netflix -->
<path d="M553 11 H556.3 L560 22 V11 H563.2 V28.5 L560 28 L556.3 18 V28 L553 28.5Z" fill="#d81f26"/>
<!-- outlook -->
<defs>
<linearGradient id="olBody" x1="0" y1="0" x2="1" y2="0"><stop offset="0" stop-color="#2fd2ff"/><stop offset="0.55" stop-color="#2bb8f8"/><stop offset="1" stop-color="#9cb8ff"/></linearGradient>
<linearGradient id="wdTop" x1="0" y1="0" x2="1" y2="0"><stop offset="0" stop-color="#3ad6ff"/><stop offset="0.6" stop-color="#48d0fc"/><stop offset="1" stop-color="#c4b4ff"/></linearGradient>
<linearGradient id="wdMid" x1="0" y1="0" x2="1" y2="0"><stop offset="0" stop-color="#1890e6"/><stop offset="0.6" stop-color="#2a8ae8"/><stop offset="1" stop-color="#7c84f4"/></linearGradient>
<linearGradient id="wdBot" x1="0" y1="0" x2="1" y2="0"><stop offset="0" stop-color="#0838c8"/><stop offset="1" stop-color="#1a58ff"/></linearGradient>
</defs>
<path d="M595.8 15.3 L607 8.6 L617.8 14.7 V29 Q617.8 31.1 615.7 31.1 H597.9 Q595.8 31.1 595.8 29Z" fill="url(#olBody)"/>
<path d="M595.8 15.3 L607 8.6 L611 11 L599.8 17.7Z" fill="#5fd0fb"/>
<path d="M599.8 17.7 L611 11 L615 13.4 L603.8 20.1Z" fill="#2a86e2"/>
<path d="M603.8 20.1 L615 13.4 L617.8 14.7 V16.6 L606.5 23.6Z" fill="#2742c4"/>
<rect x="595" y="18.9" width="9.7" height="9.7" rx="1.6" fill="#0a5ad0"/>
<ellipse cx="599.85" cy="23.75" rx="2.6" ry="2.8" fill="none" stroke="#fff" stroke-width="1.5"/>
<rect x="587" y="38" width="40" height="2" fill="#76b9ed"/>
<!-- cmd -->
<rect x="644.4" y="10.4" width="21.6" height="18.8" fill="#050505" stroke="#9c9c9c" stroke-width="0.8"/>
<rect x="644.8" y="10.8" width="20.8" height="1.6" fill="#d0d0d0"/>
<text x="646" y="18.6" font-size="6.4" font-weight="bold" fill="#e8e8e8" font-family="Liberation Mono" textLength="7" lengthAdjust="spacingAndGlyphs">C:\</text>
<line x1="653.8" y1="18.2" x2="662" y2="18.2" stroke="#e8e8e8" stroke-width="1"/>
<rect x="636" y="38" width="40" height="2" fill="#76b9ed"/>
<!-- python active -->
<rect x="681" y="0" width="48" height="40" fill="#5e6166"/>
<rect x="694" y="11" width="21" height="16" fill="#3d3d3e"/>
<rect x="694" y="9" width="21" height="2.2" fill="#0a78d4"/>
<rect x="697" y="14.5" width="5" height="1.6" fill="#2e7d32"/><rect x="697" y="17.5" width="7" height="1.6" fill="#2e7d32"/><rect x="697" y="20.5" width="6" height="1.6" fill="#2e7d32"/>
<g transform="translate(701.2 15.8) scale(0.143)">
<path d="M54.9 0.5C50.3 0.5 46 0.9 42.2 1.6 31 3.6 29 7.7 29 15.3V25.4H55.4V28.8H19.1C11.4 28.8 4.7 33.4 2.6 42.2 0.2 52.3 0.1 58.6 2.6 69.1 4.5 76.9 8.9 82.5 16.6 82.5H25.7V70.4C25.7 61.7 33.2 53.9 42.2 53.9H68.6C76 53.9 81.8 47.9 81.8 40.5V15.3C81.8 8.1 75.7 2.7 68.6 1.6 64 0.8 59.4 0.5 54.9 0.5Z" fill="#3b77b0" stroke="#fff" stroke-width="9"/>
<path d="M85.1 28.8V40.5C85.1 49.6 77.4 57.2 68.6 57.2H42.2C35 57.2 29 63.4 29 70.6V95.8C29 103 35.2 107.2 42.2 109.2 50.6 111.7 58.7 112.1 68.6 109.2 75.2 107.3 81.8 103.4 81.8 95.8V85.7H55.4V82.3H95C102.7 82.3 105.5 77 108.2 69 111 60.8 110.9 52.9 108.2 42.2 106.3 34.5 102.6 28.8 95 28.8Z" fill="#f7d247" stroke="#fff" stroke-width="9"/>
<path d="M54.9 0.5C50.3 0.5 46 0.9 42.2 1.6 31 3.6 29 7.7 29 15.3V25.4H55.4V28.8H19.1C11.4 28.8 4.7 33.4 2.6 42.2 0.2 52.3 0.1 58.6 2.6 69.1 4.5 76.9 8.9 82.5 16.6 82.5H25.7V70.4C25.7 61.7 33.2 53.9 42.2 53.9H68.6C76 53.9 81.8 47.9 81.8 40.5V15.3C81.8 8.1 75.7 2.7 68.6 1.6 64 0.8 59.4 0.5 54.9 0.5Z" fill="#3b77b0"/>
</g>
<rect x="681" y="38" width="48" height="2" fill="#76b9ed"/>
<!-- word -->
<path d="M745 16 V11.2 Q745 8.6 747.6 8.6 H760.2 Q762.8 8.6 762.8 11.2 V16Z" fill="url(#wdTop)"/>
<rect x="745" y="16" width="17.8" height="8" fill="url(#wdMid)"/>
<path d="M745 24 H762.8 V28.5 Q762.8 31.1 760.2 31.1 H747.6 Q745 31.1 745 28.5Z" fill="url(#wdBot)"/>
<rect x="741.9" y="18.3" width="9.8" height="10" rx="1.6" fill="#1a42bc"/>
<text x="742.9" y="26.6" font-size="8.6" font-weight="bold" fill="#fff" textLength="7.8" lengthAdjust="spacingAndGlyphs">W</text>
<rect x="734" y="38" width="32" height="2" fill="#76b9ed"/>
<rect x="766" y="38" width="8" height="2" fill="#5a86ad"/>
<!-- help -->
<circle cx="1451.5" cy="21" r="10.5" fill="#1b9ee2" stroke="#fff" stroke-width="1.6"/>
<text x="1451.5" y="27.5" font-size="17" font-weight="bold" fill="#fff" text-anchor="middle">?</text>
<circle cx="1459.5" cy="28" r="4.8" fill="#1b9ee2" stroke="#282e3c" stroke-width="1"/>
<rect x="1458.8" y="26.5" width="1.6" height="4" fill="#fff"/><rect x="1458.8" y="24.5" width="1.6" height="1.3" fill="#fff"/>
<!-- weather -->
<defs><linearGradient id="cloudG" x1="0" y1="0" x2="0" y2="1"><stop offset="0" stop-color="#c4e0fd"/><stop offset="1" stop-color="#7aaaf0"/></linearGradient></defs><path d="M1544.5 27.5 C1541.5 27.5 1540.5 25.5 1540.8 23.5 C1541.2 21.5 1543 20.3 1545.2 20.6 C1546 16.5 1549.5 13.5 1554 13.5 C1558.5 13.5 1561.5 16.5 1562 20.5 C1564 20.8 1565.2 22.5 1565 24.5 C1564.8 26.5 1563.5 27.5 1561.5 27.5Z" fill="url(#cloudG)"/>
<circle cx="1558.8" cy="15.5" r="5.5" fill="#c42b1c"/>
<text x="1558.8" y="18.8" font-size="8" font-weight="bold" fill="#fff" text-anchor="middle">5</text>
<text x="1573" y="25" font-size="14.5" fill="#e6e6e6" textLength="21" lengthAdjust="spacingAndGlyphs">4°C</text><text x="1603.6" y="25" font-size="14.5" fill="#e6e6e6" textLength="54.7" lengthAdjust="spacingAndGlyphs">Nuageux</text>
<!-- tray -->
<path d="M1683.5 23 L1689.3 17.5 L1695 23" fill="none" stroke="#fff" stroke-width="1.2"/>
<g fill="none" stroke="#ddd" stroke-width="1"><rect x="1708.5" y="16" width="8" height="10" rx="2"/><path d="M1716.5 19 L1719 17.5 V24.5 L1716.5 23"/><path d="M1710 13.5 H1715 M1710 28.5 H1715"/></g>
<g fill="none" stroke="#ddd" stroke-width="1.1"><path d="M1731.5 22 A12 12 0 0 1 1743 12"/><path d="M1734.5 24 A8.5 8.5 0 0 1 1743 15.5"/><path d="M1737.5 26 A5 5 0 0 1 1743 20"/></g>
<circle cx="1741.5" cy="26" r="1.5" fill="#ddd"/>
<g fill="none" stroke="#ddd" stroke-width="1.1"><path d="M1753.5 18 H1756.5 L1760.5 14 V28 L1756.5 24 H1753.5Z"/><path d="M1763 18 Q1765 21 1763 24"/><path d="M1766 15.5 Q1769.5 21 1766 26.5"/></g>
<rect x="1777" y="18" width="16" height="12" rx="1" fill="#e81123"/>
<circle cx="1781" cy="15.5" r="1.8" fill="#fff"/><circle cx="1789" cy="15.5" r="1.8" fill="#fff"/>
<text x="1785" y="27.5" font-size="8" font-weight="bold" fill="#fff" text-anchor="middle">15</text>
<text x="1817.8" y="14.8" font-size="11.8" fill="#fff" textLength="26.7" lengthAdjust="spacingAndGlyphs">21:34</text>
<text x="1802.8" y="32.5" font-size="11.8" fill="#fff" textLength="58" lengthAdjust="spacingAndGlyphs">08/02/2026</text>
<path d="M1878.5 11.5 H1897 V24.5 H1885 L1881 28 V24.5 H1878.5Z" fill="#fff"/>
<g stroke="#282e3c" stroke-width="1"><line x1="1881" y1="15" x2="1894" y2="15"/><line x1="1881" y1="18" x2="1894" y2="18"/><line x1="1881" y1="21" x2="1890" y2="21"/></g>
<circle cx="1894" cy="29" r="7.5" fill="#282e3c" stroke="#888" stroke-width="1"/>
<text x="1894" y="33.5" font-size="11" font-weight="bold" fill="#fff" text-anchor="middle">1</text>
<line x1="1915.5" y1="0" x2="1915.5" y2="40" stroke="#7d828c" stroke-width="1"/>
</svg>
</body></html>
